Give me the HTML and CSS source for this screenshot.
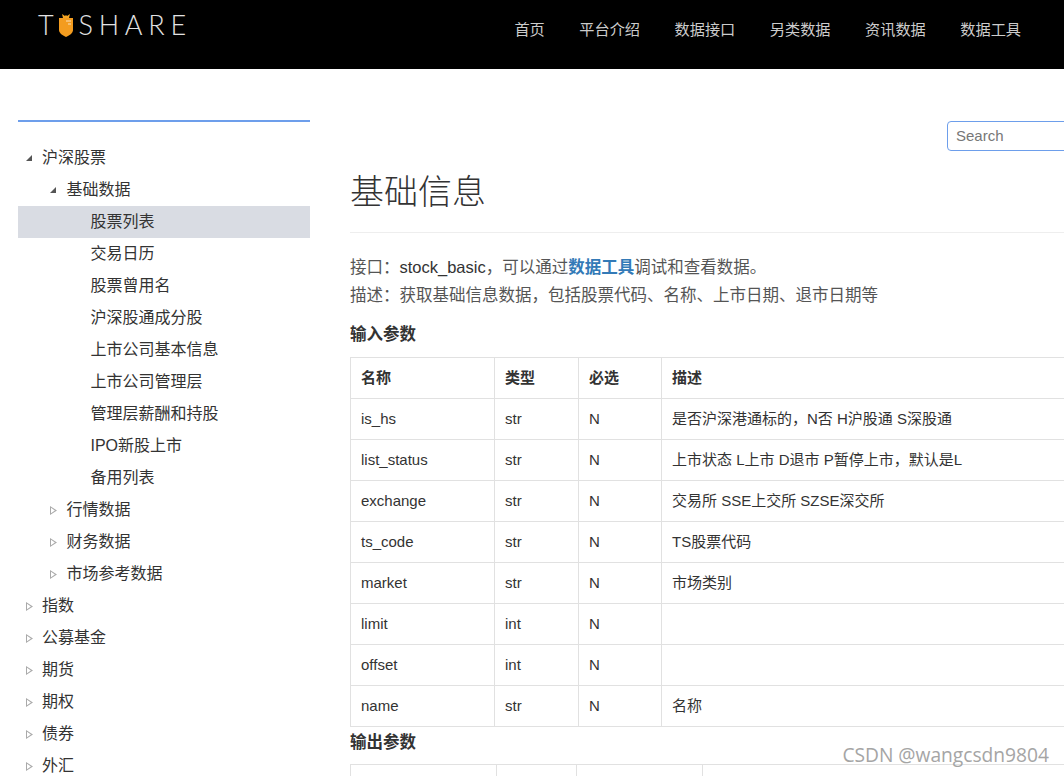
FILE: index.html
```html
<!DOCTYPE html>
<html lang="zh">
<head>
<meta charset="utf-8">
<title>基础信息</title>
<link rel="stylesheet" href="styles.css">
</head>
<body>
<header class="topbar">
  <a class="logo"><span>T</span><svg class="carrot" width="14" height="23" viewBox="0 0 14 23"><path d="M3 0l3 2 1-1 1 1 3-2-1 4H4z" fill="#f5a623"/><path d="M0 4h14v12c0 3-3 5-7 7-4-2-7-4-7-7z" fill="#f39c1f"/><path d="M7 7h5M9 10h3" stroke="#fff" stroke-width="1" opacity=".7"/></svg><span>SHARE</span></a>
  <nav class="nav">
    <a>首页</a><a>平台介绍</a><a>数据接口</a><a>另类数据</a><a>资讯数据</a><a>数据工具</a>
  </nav>
</header>
<div class="page">
  <aside class="side">
    <ul class="tree">
      <li class="l0 open">沪深股票</li>
      <li class="l1 open">基础数据</li>
      <li class="l2 active">股票列表</li>
      <li class="l2">交易日历</li>
      <li class="l2">股票曾用名</li>
      <li class="l2">沪深股通成分股</li>
      <li class="l2">上市公司基本信息</li>
      <li class="l2">上市公司管理层</li>
      <li class="l2">管理层薪酬和持股</li>
      <li class="l2">IPO新股上市</li>
      <li class="l2">备用列表</li>
      <li class="l1 closed">行情数据</li>
      <li class="l1 closed">财务数据</li>
      <li class="l1 closed">市场参考数据</li>
      <li class="l0 closed">指数</li>
      <li class="l0 closed">公募基金</li>
      <li class="l0 closed">期货</li>
      <li class="l0 closed">期权</li>
      <li class="l0 closed">债券</li>
      <li class="l0 closed">外汇</li>
    </ul>
  </aside>
  <main class="main">
    <div class="searchrow"><input class="search" type="text" placeholder="Search"></div>
    <h1 class="title">基础信息</h1>
    <p class="line">接口：<span class="dark">stock_basic</span>，可以通过<a class="link">数据工具</a>调试和查看数据。</p>
    <p class="line">描述：获取基础信息数据，包括股票代码、名称、上市日期、退市日期等</p>
    <h2 class="sub first">输入参数</h2>
    <table class="tbl in">
      <thead><tr><th>名称</th><th>类型</th><th>必选</th><th>描述</th></tr></thead>
      <tbody>
        <tr><td>is_hs</td><td>str</td><td>N</td><td>是否沪深港通标的，N否 H沪股通 S深股通</td></tr>
        <tr><td>list_status</td><td>str</td><td>N</td><td>上市状态 L上市 D退市 P暂停上市，默认是L</td></tr>
        <tr><td>exchange</td><td>str</td><td>N</td><td>交易所 SSE上交所 SZSE深交所</td></tr>
        <tr><td>ts_code</td><td>str</td><td>N</td><td>TS股票代码</td></tr>
        <tr><td>market</td><td>str</td><td>N</td><td>市场类别</td></tr>
        <tr><td>limit</td><td>int</td><td>N</td><td></td></tr>
        <tr><td>offset</td><td>int</td><td>N</td><td></td></tr>
        <tr><td>name</td><td>str</td><td>N</td><td>名称</td></tr>
      </tbody>
    </table>
    <h2 class="sub after">输出参数</h2>
    <table class="tbl out">
      <thead><tr><th></th><th></th><th></th><th></th></tr></thead>
    </table>
  </main>
</div>
<div class="mark">CSDN @wangcsdn9804</div>
</body>
</html>
```
FILE: styles.css
```css
* { box-sizing: border-box; }
html, body { margin: 0; height: 776px; overflow: hidden; background: #fff; }
body { font-family: "Liberation Sans", "Noto Sans CJK SC", sans-serif; font-size: 16px; color: #333; position: relative; }
.topbar { height: 69px; background: #000; display: flex; align-items: flex-start; justify-content: space-between; padding-left: 38px; }
.logo { display: flex; align-items: center; height: 24px; margin-top: 13px; font-family: "Lato", sans-serif; font-weight: 300; font-size: 27px; letter-spacing: 5.8px; color: #e2e2e2; line-height: 24px; }
.carrot { margin: 0 5px 0 0; }
.nav { display: flex; gap: 34.5px; padding: 20px 43px 0 0; color: #ccc; line-height: 20px; font-size: 15.2px; }
.page { display: flex; align-items: flex-start; padding-left: 18px; }
.side { width: 292px; flex: none; margin-top: 51px; border-top: 2px solid #6d9eeb; padding-top: 20px; }
.tree { list-style: none; margin: 0; padding: 0; color: #333; }
.tree li { height: 32px; line-height: 32px; position: relative; }
.l0 { padding-left: 24px; }
.l1 { padding-left: 48.5px; }
.l2 { padding-left: 72.5px; }
.active { background: #d9dce3; }
.open::before, .closed::before { content: ""; position: absolute; width: 0; height: 0; }
.open::before { top: 13px; border-style: solid; border-width: 0 0 6px 6px; border-color: transparent transparent #555 transparent; }
.l0.open::before { left: 8px; }
.l1.open::before { left: 32px; }
.closed::before { top: 12px; width: 7px; height: 9px; background: #aaa; clip-path: polygon(0 0, 100% 50%, 0 100%, 0 0, 1px 20%, 1px 80%, 70% 50%, 1px 20%); }
.l0.closed::before { left: 8px; }
.l1.closed::before { left: 32px; }
.main { margin-left: 40px; width: 760px; flex: none; }
.searchrow { margin-top: 52px; padding-left: 597px; height: 30px; }
.search { display: block; width: 160px; height: 30px; border: 1px solid #6d9eeb; border-radius: 4px; padding: 0 8px 2px; font: 15px "Liberation Sans", sans-serif; color: #555; outline: none; }
.search::placeholder { color: #777; }
.title { margin: 19px 0 0; height: 63px; padding-top: 2px; border-bottom: 1px solid #eee; font-size: 34px; font-weight: 300; line-height: 40px; color: #333; }
.line { margin: 0; line-height: 28px; color: #555; height: 28px; font-size: 16.5px; }
.title + .line { margin-top: 20px; }
.dark { color: #333; }
.link { color: #337ab7; font-weight: 700; }
.sub { margin: 0; font-size: 16.5px; font-weight: 700; color: #333; line-height: 20px; }
.first { margin-top: 15px; }
.after { margin-top: 5px; }
.tbl { border-collapse: collapse; table-layout: fixed; width: 760px; font-size: 15px; }
.in { margin-top: 13px; }
.out { margin-top: 12px; }
.tbl th, .tbl td { border: 1px solid #e1e1e1; height: 41px; padding: 0 10px; text-align: left; color: #333; line-height: 20px; }
.tbl th { font-weight: 700; padding-bottom: 1px; }
.in th:nth-child(1) { width: 144px; }
.in th:nth-child(2) { width: 84px; }
.in th:nth-child(3) { width: 83px; }
.out th:nth-child(1) { width: 146px; }
.out th:nth-child(2) { width: 80px; }
.out th:nth-child(3) { width: 126px; }
.mark { position: absolute; right: 15px; bottom: 9px; font-family: "Open Sans", sans-serif; font-size: 19.2px; color: #a5a5a5; line-height: 24px; }
```
